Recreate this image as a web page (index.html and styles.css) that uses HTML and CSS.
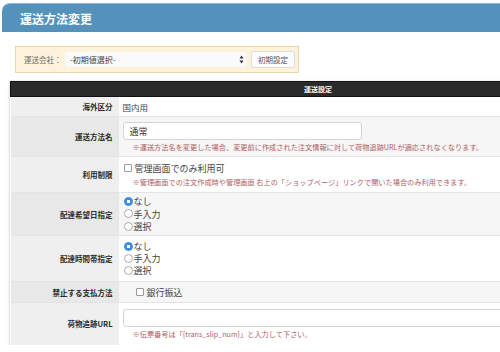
FILE: index.html
```html
<!DOCTYPE html>
<html lang="ja">
<head>
    <meta charset="UTF-8">
    <title>運送方法変更</title>
    <link rel="stylesheet" href="styles.css">
</head>
<body>
    <h1 class="page-title">運送方法変更</h1>

    <div class="carrier-box">
        <span class="carrier-label">運送会社：</span>
        <div class="select-wrap">
            <select class="carrier-select">
                <option>-初期値選択-</option>
            </select>
            <svg class="select-arrows" width="5" height="9" viewBox="0 0 5 9">
                <path d="M2.5 0.5 L4.5 3.5 L0.5 3.5 Z M2.5 8.5 L4.5 5.5 L0.5 5.5 Z" fill="#333"/>
            </svg>
        </div>
        <button class="reset-btn">初期設定</button>
    </div>

    <table class="settings">
        <tr>
            <th class="table-head" colspan="2">運送設定</th>
        </tr>
        <tr class="row-a">
            <th>海外区分</th>
            <td>国内用</td>
        </tr>
        <tr class="row-b">
            <th>運送方法名</th>
            <td>
                <input type="text" class="text-input name-input" value="通常">
                <div class="note">※運送方法名を変更した場合、変更前に作成された注文情報に対して荷物追跡URLが適応されなくなります。</div>
            </td>
        </tr>
        <tr class="row-c">
            <th>利用制限</th>
            <td>
                <label class="check"><input type="checkbox">管理画面でのみ利用可</label>
                <div class="note">※管理画面での注文作成時や管理画面 右上の「ショップページ」リンクで開いた場合のみ利用できます。</div>
            </td>
        </tr>
        <tr class="row-d">
            <th>配達希望日指定</th>
            <td>
                <label class="radio"><input type="radio" name="date" checked>なし</label>
                <label class="radio"><input type="radio" name="date">手入力</label>
                <label class="radio"><input type="radio" name="date">選択</label>
            </td>
        </tr>
        <tr class="row-e">
            <th>配達時間帯指定</th>
            <td>
                <label class="radio"><input type="radio" name="time" checked>なし</label>
                <label class="radio"><input type="radio" name="time">手入力</label>
                <label class="radio"><input type="radio" name="time">選択</label>
            </td>
        </tr>
        <tr class="row-f">
            <th>禁止する支払方法</th>
            <td>
                <label class="check check-indent"><input type="checkbox">銀行振込</label>
            </td>
        </tr>
        <tr class="row-g">
            <th>荷物追跡URL</th>
            <td>
                <input type="text" class="text-input url-input">
                <div class="note">※伝票番号は「{trans_slip_num}」と入力して下さい。</div>
            </td>
        </tr>
    </table>
</body>
</html>
```

FILE: styles.css
```css
body {
    margin: 0;
    font-family: "Noto Sans CJK JP", "Noto Sans", sans-serif;
    color: #333;
    background-color: #fff;
    overflow: hidden;
}
.page-title {
    margin: 3px 0 0 2px;
    height: 29px;
    line-height: 29px;
    padding-left: 18px;
    background-color: #5592bb;
    border-top: 1px solid #8bb8d6;
    box-sizing: border-box;
    border-radius: 8px 0 0 0;
    color: #fff;
    font-size: 12px;
    font-weight: bold;
}
.carrier-box {
    display: flex;
    align-items: center;
    width: 284px;
    height: 27px;
    margin: 14px 0 0 15px;
    padding: 0 0 0 8px;
    box-sizing: border-box;
    background-color: #fdf3da;
    border: 1px solid #ebd7a6;
}
.carrier-label {
    font-size: 7.5px;
    color: #666;
    width: 41px;
}
.select-wrap {
    display: flex;
    align-items: center;
    width: 182px;
    height: 15px;
    background-color: #fafafa;
    border-radius: 2px;
}
.carrier-select {
    flex: 1;
    appearance: none;
    -webkit-appearance: none;
    border: none;
    background: transparent;
    font-family: inherit;
    font-size: 8px;
    color: #444;
    padding: 0 0 0 5px;
    height: 15px;
    outline: none;
}
.select-arrows {
    margin-right: 3px;
}
.reset-btn {
    margin-left: 4px;
    width: 44px;
    height: 17px;
    padding: 0;
    font-family: inherit;
    font-size: 7.5px;
    color: #555;
    background-color: #fcfcfc;
    border: 1px solid #ddd;
    border-radius: 2px;
}
.settings {
    margin: 8px 0 0 10px;
    width: 616px;
    border-collapse: collapse;
    box-shadow: 0 1px 3px rgba(0, 0, 0, 0.25);
}
.settings th, .settings td {
    padding: 0;
    border-top: 1px solid #e4e4e4;
}
.settings .table-head {
    height: 14px;
    background-color: #2b2b2b;
    border: 1px solid #111;
    color: #fff;
    font-size: 7px;
    font-weight: bold;
    text-align: center;
}
.settings tr > th:not(.table-head) {
    width: 102px;
    padding-right: 6px;
    text-align: right;
    font-size: 7.5px;
    font-weight: bold;
    color: #2a2a2a;
    background-color: #efefef;
}
.settings td {
    padding-left: 4px;
    font-size: 8.5px;
    color: #444;
    vertical-align: middle;
}
.row-b td, .row-d td, .row-f td {
    background-color: #f6f6f6;
}
.row-b th, .row-d th, .row-f th {
    background-color: #e8e8e8 !important;
}
.row-a { height: 20px; }
.row-b { height: 40px; }
.row-c { height: 36px; }
.row-d { height: 43px; }
.row-e { height: 46px; }
.row-f { height: 21px; }
.row-g { height: 42px; }
.text-input {
    display: block;
    height: 18px;
    box-sizing: border-box;
    padding: 0 6px;
    border: 1px solid #d4d4d4;
    border-radius: 3px;
    background-color: #fff;
    font-family: inherit;
    font-size: 9px;
    color: #333;
    margin-top: 1px;
}
.name-input {
    width: 239px;
}
.url-input {
    width: 500px;
}
.note {
    padding-left: 10px;
    margin-top: 2px;
    font-size: 7.2px;
    line-height: 10px;
    color: #b0605f;
    white-space: nowrap;
}
.check, .radio {
    display: flex;
    align-items: center;
    height: 12.4px;
    font-size: 9px;
    color: #444;
}
.check-indent {
    margin-left: 12px;
}
.check input {
    appearance: none;
    -webkit-appearance: none;
    width: 8px;
    height: 8px;
    margin: 0 3px 0 1px;
    border: 1px solid #999;
    border-radius: 1px;
    background-color: #fff;
}
.radio input {
    appearance: none;
    -webkit-appearance: none;
    width: 9px;
    height: 9px;
    margin: 0 1px 0 1px;
    border: 1px solid #aaa;
    border-radius: 50%;
    background-color: #fff;
    box-sizing: border-box;
}
.radio input:checked {
    border-color: #3a8de2;
    background: radial-gradient(circle, #fff 0 1.5px, #3a8de2 2px);
}
```
